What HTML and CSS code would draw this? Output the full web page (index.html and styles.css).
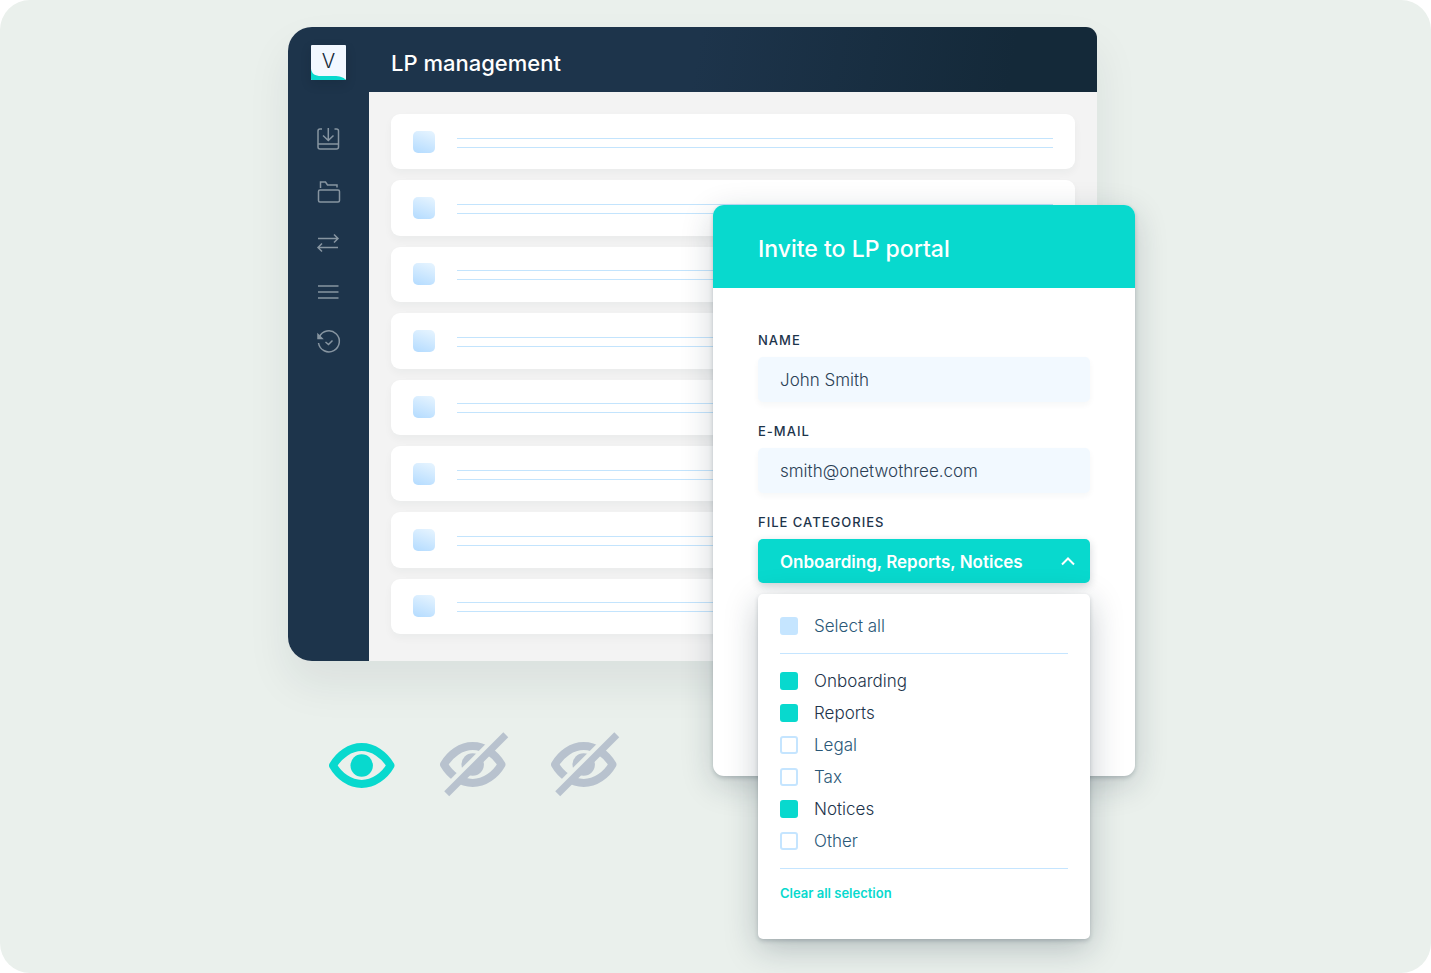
FILE: index.html
```html
<!DOCTYPE html>
<html lang="en">
<head>
<meta charset="utf-8">
<meta name="viewport" content="width=device-width, initial-scale=1">
<title>LP management</title>
<link rel="stylesheet" href="styles.css">
</head>
<body>
<main class="stage">
  <div class="scene">
    <section class="app">
      <aside class="sidebar">
        <a class="logo" href="#" aria-label="Home">
          <svg class="logo-wave" viewBox="0 0 35 35" aria-hidden="true"><path d="M0 24C1 29 4 31 10 31H23C29 31 32 32 35 35H0Z" fill="#08d9ce"/></svg>
          <span class="logo-letter">V</span>
        </a>
        <nav class="nav" aria-label="Main">
          <a href="#" aria-label="Downloads"><svg viewBox="1 0 24 24"><path d="M6 2H4Q2 2 2 4V20Q2 22 4 22H20.500Q22.500 22 22.500 20V4Q22.500 2 20.500 2H18.500M2 17H22.500M12.300 1V13M7 8.500L12.300 13.500L17.500 8.500"/></svg></a>
          <a href="#" aria-label="Files"><svg viewBox="1 -2 24 24"><path d="M4.500 8V2H9.500L11.500 5H21V7.500"/><rect x="2.500" y="10" width="21" height="12" rx="1.500"/></svg></a>
          <a href="#" aria-label="Transfers"><svg viewBox="1 -2 24 24"><path d="M2 7.500H22M18 3.500L22 7.500L18 11.500M22 16.500H2M6 12.500L2 16.500L6 20.500"/></svg></a>
          <a href="#" aria-label="List"><svg viewBox="1 0 24 24"><path d="M2 6H22.500M2 12H22.500M2 18H22.500"/></svg></a>
          <a href="#" aria-label="History"><svg viewBox="1 1 24 24"><path d="M3.300 7A10.500 10.500 0 1 1 2.500 13M9.500 12L12.500 14.500L16.500 10.500"/><path d="M2 4.500V8.500H6Z" fill="#8795a1"/></svg></a>
        </nav>
      </aside>
      <header class="app-header"><h1>LP management</h1></header>
      <ul class="rows">
        <li class="row"><span class="thumb"></span><span class="lines"></span></li>
        <li class="row"><span class="thumb"></span><span class="lines"></span></li>
        <li class="row"><span class="thumb"></span><span class="lines"></span></li>
        <li class="row"><span class="thumb"></span><span class="lines"></span></li>
        <li class="row"><span class="thumb"></span><span class="lines"></span></li>
        <li class="row"><span class="thumb"></span><span class="lines"></span></li>
        <li class="row"><span class="thumb"></span><span class="lines"></span></li>
        <li class="row"><span class="thumb"></span><span class="lines"></span></li>
      </ul>
    </section>

    <div class="eyes">
      <svg class="eye eye-on" viewBox="0 0 69 66" role="img" aria-label="Visible">
        <path d="M4 33.500C10 23 21 15 32.700 15S55.500 23 61.500 33.500C55.500 44 44.500 52 32.700 52S10 44 4 33.500Z" fill="none" stroke="currentColor" stroke-width="8" stroke-linejoin="round"/>
        <circle cx="32.700" cy="33.500" r="11.200" fill="currentColor"/>
      </svg>
      <svg class="eye eye-off" viewBox="0 0 69 66" role="img" aria-label="Hidden">
        <defs>
          <mask id="slash-gap" maskUnits="userSpaceOnUse" x="0" y="0" width="69" height="66">
            <rect width="69" height="66" fill="#fff"/>
            <path d="M70 -7L-2 65" stroke="#000" stroke-width="7.500"/>
          </mask>
          <g id="eye-hidden">
            <g mask="url(#slash-gap)">
              <path d="M4 32.500C10 22 21 14 32.700 14S55.500 22 61.500 32.500C55.500 43 44.500 51 32.700 51S10 43 4 32.500Z" fill="none" stroke="currentColor" stroke-width="8" stroke-linejoin="round"/>
              <circle cx="32.700" cy="32.500" r="11.200" fill="currentColor"/>
            </g>
            <path d="M65.800 2.700L6.700 61.800" stroke="currentColor" stroke-width="7"/>
          </g>
        </defs>
        <use href="#eye-hidden"/>
      </svg>
      <svg class="eye eye-off" viewBox="0 0 69 66" role="img" aria-label="Hidden"><use href="#eye-hidden"/></svg>
    </div>

    <section class="modal" role="dialog" aria-labelledby="modal-title">
      <header class="modal-header"><h2 id="modal-title">Invite to LP portal</h2></header>
      <form class="form">
        <div class="field">
          <label for="name">NAME</label>
          <input class="text-input" id="name" type="text" value="John Smith">
        </div>
        <div class="field">
          <label for="email">E-MAIL</label>
          <input class="text-input" id="email" type="email" value="smith@onetwothree.com">
        </div>
        <div class="field">
          <label for="categories">FILE CATEGORIES</label>
          <button class="dropdown" id="categories" type="button" aria-expanded="true" aria-controls="category-menu">
            <span>Onboarding, Reports, Notices</span>
            <svg class="chevron" viewBox="0 0 14 9" aria-hidden="true"><path d="M1 7.500L7 1.500L13 7.500"/></svg>
          </button>
          <div class="menu" id="category-menu">
            <div class="group">
              <label class="option"><input class="all" type="checkbox"><span>Select all</span></label>
            </div>
            <div class="group">
              <label class="option"><input type="checkbox" checked><span>Onboarding</span></label>
              <label class="option"><input type="checkbox" checked><span>Reports</span></label>
              <label class="option"><input type="checkbox"><span>Legal</span></label>
              <label class="option"><input type="checkbox"><span>Tax</span></label>
              <label class="option"><input type="checkbox" checked><span>Notices</span></label>
              <label class="option"><input type="checkbox"><span>Other</span></label>
            </div>
            <button class="clear" type="reset">Clear all selection</button>
          </div>
        </div>
      </form>
    </section>
  </div>
</main>
</body>
</html>
```
FILE: styles.css
```css
:root {
  --teal: #08d9ce;
  --navy: #1d344b;
  --sky: #c5e5ff;
}

* {
  box-sizing: border-box;
}

body {
  margin: 0;
  background: #fff;
  color: var(--navy);
  font-family: Inter, "Liberation Sans", sans-serif;
}

h1,
h2 {
  margin: 0;
  color: #fff;
}

input,
button {
  margin: 0;
  border: 0;
  font: inherit;
}

.stage {
  min-height: 100vh;
  padding: 27px 296px 36px 288px;
  border-radius: 30px;
  background: #eaf0ec;
}

.scene {
  position: relative;
}

/* Application window */
.app {
  display: grid;
  grid-template-columns: 81px 1fr;
  grid-template-rows: 65px 1fr;
  min-height: 634px;
  margin-right: 38px;
  border-radius: 24px 11px 0 24px;
  background: #f3f3f3;
  box-shadow: 0 22px 44px rgba(20, 41, 57, 0.08);
}

.sidebar {
  grid-row: 1 / 3;
  display: flex;
  flex-direction: column;
  align-items: center;
  padding-top: 18px;
  border-radius: 24px 0 0 24px;
  background: var(--navy);
}

.logo {
  display: grid;
  width: 35px;
  height: 35px;
  overflow: hidden;
  border-radius: 1px;
  background: #f2f8ff;
  color: #142939;
  text-decoration: none;
  box-shadow: 0 4px 11px rgba(8, 20, 30, 0.15);
}

.logo-wave,
.logo-letter {
  grid-area: 1 / 1;
}

.logo-letter {
  font-size: 20px;
  font-weight: 300;
  line-height: 33px;
  text-align: center;
}

.nav {
  display: flex;
  flex-direction: column;
  gap: 27px;
  padding-top: 47px;
}

.nav a {
  display: flex;
}

.nav svg {
  width: 24px;
  height: 24px;
  overflow: visible;
  fill: none;
  stroke: #8795a1;
  stroke-width: 1.5;
}

.app-header {
  display: flex;
  align-items: center;
  padding: 6px 22px 0;
  border-radius: 0 11px 0 0;
  background: linear-gradient(100deg, var(--navy) 45%, #142939 88%);
}

.app-header h1 {
  font-size: 22px;
  font-weight: 500;
}

.rows {
  display: grid;
  grid-auto-rows: 1fr;
  gap: 11px;
  margin: 0;
  padding: 22px 22px 27px;
  list-style: none;
}

.row {
  display: flex;
  align-items: center;
  gap: 22px;
  padding: 0 22px;
  border-radius: 9px;
  background: #fff;
  box-shadow: 0 4px 9px rgba(20, 41, 57, 0.04);
}

.thumb {
  width: 22px;
  height: 22px;
  border-radius: 5px;
  background: linear-gradient(200deg, #e8f5ff, #b3dbff);
}

.lines {
  flex: 1;
  height: 10px;
  margin-top: 2px;
  border: solid #c3e4fd;
  border-width: 1px 0;
}

/* Visibility icons */
.eyes {
  display: flex;
  gap: 42px;
  padding: 71px 0 0 41px;
}

.eye {
  width: 69px;
  height: 66px;
}

.eye-on {
  color: var(--teal);
}

.eye-off {
  color: #b8c2ce;
}

/* Invite dialog */
.modal {
  position: absolute;
  top: 178px;
  right: 0;
  width: 422px;
  min-height: 571px;
  border-radius: 11px;
  background: #fff;
  box-shadow: 0 2px 4px rgba(20, 41, 57, 0.2), 0 9px 33px rgba(20, 41, 57, 0.2);
}

.modal-header {
  padding: 29px 45px 24px;
  border-radius: 11px 11px 0 0;
  background: var(--teal);
}

.modal-header h2 {
  font-size: 23px;
  font-weight: 450;
  line-height: 30px;
}

.form {
  display: grid;
  gap: 20px;
  padding: 43px 45px;
}

.field {
  position: relative;
  display: grid;
  gap: 8px;
}

.field > label {
  font-size: 13px;
  font-weight: 500;
  letter-spacing: 1px;
  line-height: 18px;
}

.text-input {
  width: 100%;
  height: 45px;
  padding: 0 22px;
  border-radius: 5px;
  background: #f2f9ff;
  color: #2b4055;
  font-size: 17px;
  font-weight: 350;
  box-shadow: 0 3px 6px rgba(20, 41, 57, 0.04);
}

.dropdown {
  display: flex;
  align-items: center;
  justify-content: space-between;
  height: 44px;
  padding: 2px 15px 0 22px;
  border-radius: 5px;
  background: var(--teal);
  color: #fff;
  font-size: 17px;
  font-weight: 600;
  box-shadow: 0 3px 9px rgba(20, 41, 57, 0.2);
}

.chevron {
  width: 14px;
  height: 9px;
  margin-bottom: 2px;
  fill: none;
  stroke: #fff;
  stroke-width: 2;
}

/* Category menu */
.menu {
  position: absolute;
  top: calc(100% + 11px);
  left: 0;
  right: 0;
  padding: 16px 22px 33px;
  border-radius: 5px;
  background: #fff;
  box-shadow: 0 2px 4px rgba(20, 41, 57, 0.2), 0 9px 33px rgba(20, 41, 57, 0.25);
}

.group {
  margin-bottom: 11px;
  padding-bottom: 11px;
  border-bottom: 1px solid var(--sky);
}

.option {
  display: flex;
  align-items: center;
  gap: 16px;
  height: 32px;
  color: #2b5877;
  font-size: 17px;
  font-weight: 350;
}

.option:has(:checked) {
  color: var(--navy);
}

.option input {
  width: 18px;
  height: 18px;
  border: 2px solid var(--sky);
  border-radius: 3px;
  appearance: none;
}

.option input.all {
  background: var(--sky);
}

.option input:checked {
  border-color: var(--teal);
  background: var(--teal);
}

.clear {
  display: block;
  padding: 0;
  background: none;
  color: var(--teal);
  font-size: 13px;
  font-weight: 600;
  line-height: 26px;
}
```
